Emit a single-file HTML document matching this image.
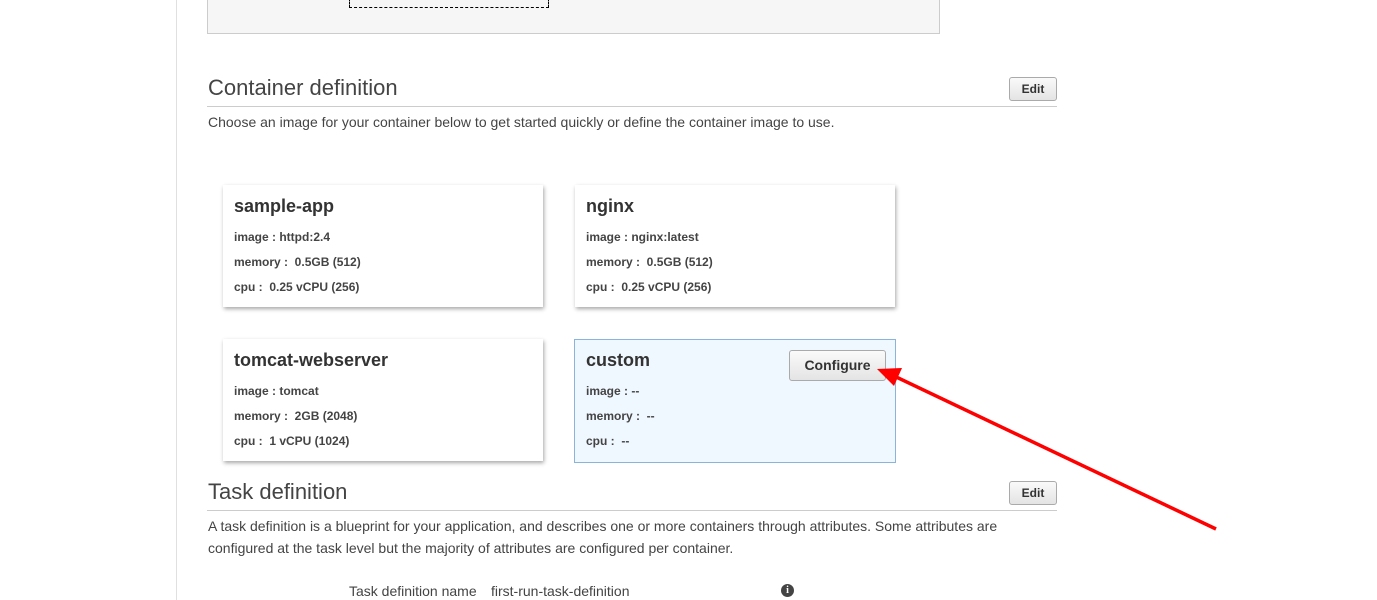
<!DOCTYPE html>
<html><head><style>
body{margin:0;width:1377px;height:600px;overflow:hidden;background:#fff;font-family:"Liberation Sans",Arial,sans-serif;color:#444;position:relative}
.abs{position:absolute}
.card{position:absolute;width:320px;height:122px;background:#fff;box-shadow:1px 2px 4px rgba(0,0,0,.35);box-sizing:border-box;padding:10px 11px}
.card h3{margin:0;font-size:18px;font-weight:bold;color:#333;line-height:22px}
.card p{margin:0;font-size:12px;font-weight:bold;color:#444;line-height:25px}
.card p:first-of-type{margin-top:8px}
.btn{position:absolute;border:1px solid #aaa;border-radius:3px;background:linear-gradient(#fafafa,#e4e4e4);font-size:12px;font-weight:bold;color:#333;text-align:center;box-sizing:border-box}
h2{position:absolute;margin:0;font-weight:normal;font-size:22px;color:#444}
.hr{position:absolute;left:207px;width:850px;height:1px;background:#ccc}
.t{position:absolute;font-size:14px;color:#444}
</style></head><body>
<div class="abs" style="left:176px;top:0;width:1px;height:600px;background:#e0e0e0"></div>
<div class="abs" style="left:207px;top:-1px;width:733px;height:35px;background:#f6f6f6;border:1px solid #ccc;box-sizing:border-box"></div>
<div class="abs" style="left:349px;top:-2px;width:200px;height:10px;border:1px dashed #000;border-top:none;box-sizing:border-box"></div>
<h2 style="left:208px;top:75px">Container definition</h2>
<div class="btn" style="left:1009px;top:77px;width:48px;height:24px;line-height:22px">Edit</div>
<div class="hr" style="top:106px"></div>
<div class="t" style="left:208px;top:114px">Choose an image for your container below to get started quickly or define the container image to use.</div>
<div class="card" style="left:223px;top:185px"><h3>sample-app</h3><p>image : httpd:2.4</p><p>memory :&nbsp; 0.5GB (512)</p><p>cpu :&nbsp; 0.25 vCPU (256)</p></div>
<div class="card" style="left:575px;top:185px"><h3>nginx</h3><p>image : nginx:latest</p><p>memory :&nbsp; 0.5GB (512)</p><p>cpu :&nbsp; 0.25 vCPU (256)</p></div>
<div class="card" style="left:223px;top:339px"><h3>tomcat-webserver</h3><p>image : tomcat</p><p>memory :&nbsp; 2GB (2048)</p><p>cpu :&nbsp; 1 vCPU (1024)</p></div>
<div class="card" style="left:574px;top:339px;width:322px;height:124px;background:#f0f8ff;border:1px solid #8ab4dc;box-shadow:none;padding:9px 11px"><h3>custom</h3><p>image : --</p><p>memory :&nbsp; --</p><p>cpu :&nbsp; --</p></div>
<div class="btn" style="left:789px;top:350px;width:97px;height:31px;line-height:29px;font-size:14px">Configure</div>
<svg class="abs" style="left:0;top:0" width="1377" height="600"><line x1="1216" y1="529" x2="892" y2="375" stroke="#f00" stroke-width="3.5"/><polygon points="877,369 902,368 894,386" fill="#f00"/></svg>
<h2 style="left:208px;top:479px">Task definition</h2>
<div class="btn" style="left:1009px;top:481px;width:48px;height:24px;line-height:22px">Edit</div>
<div class="hr" style="top:510px"></div>
<div class="t" style="left:208px;top:515px;line-height:22px;width:820px">A task definition is a blueprint for your application, and describes one or more containers through attributes. Some attributes are configured at the task level but the majority of attributes are configured per container.</div>
<div class="t" style="left:349px;top:583px">Task definition name</div>
<div class="t" style="left:491px;top:583px">first-run-task-definition</div>
<div class="abs" style="left:781px;top:584px;width:13px;height:13px;border-radius:50%;background:#444;color:#fff;font-size:10px;font-weight:bold;text-align:center;line-height:13px;font-family:'Liberation Serif',serif">i</div>
</body></html>
